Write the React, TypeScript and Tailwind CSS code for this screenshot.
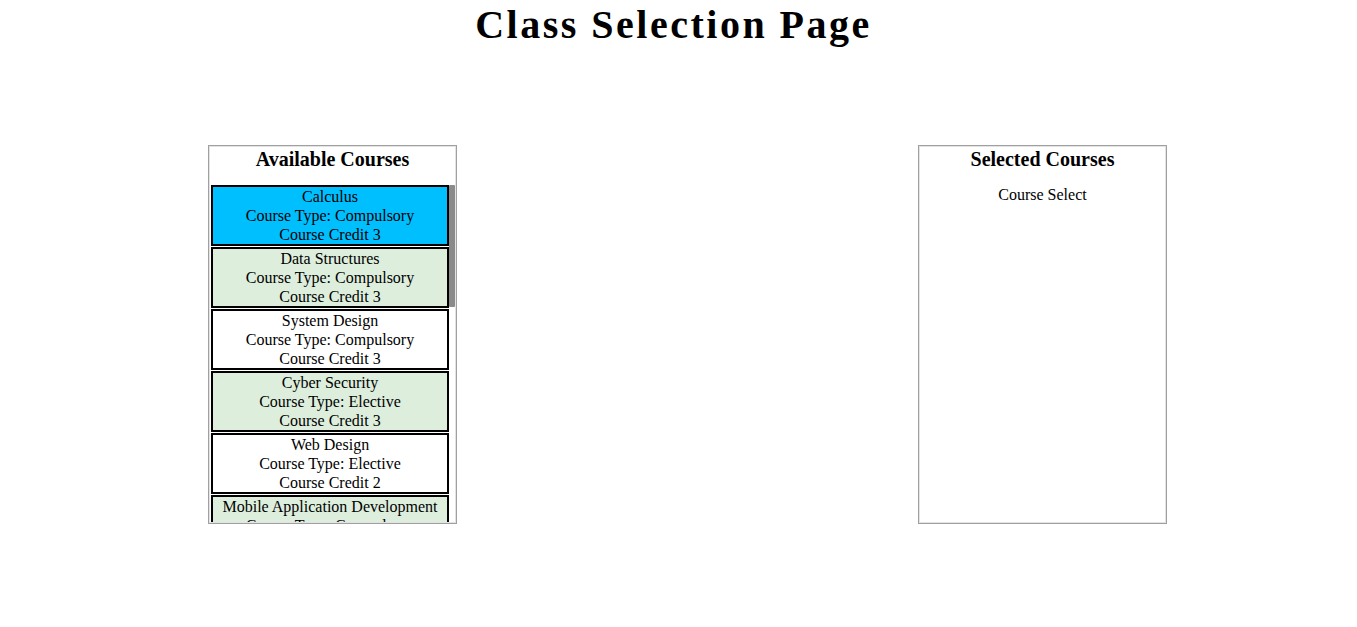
import React, { useState } from "react";

interface Course {
  name: string;
  type: string;
  credit: number;
}

const courses: Course[] = [
  { name: "Calculus", type: "Compulsory", credit: 3 },
  { name: "Data Structures", type: "Compulsory", credit: 3 },
  { name: "System Design", type: "Compulsory", credit: 3 },
  { name: "Cyber Security", type: "Elective", credit: 3 },
  { name: "Web Design", type: "Elective", credit: 2 },
  { name: "Mobile Application Development", type: "Compulsory", credit: 3 },
  { name: "Operating Systems", type: "Compulsory", credit: 3 },
  { name: "Computer Networks", type: "Compulsory", credit: 3 },
  { name: "Machine Learning", type: "Elective", credit: 3 },
  { name: "Database Systems", type: "Compulsory", credit: 3 },
  { name: "Cloud Computing", type: "Elective", credit: 2 },
  { name: "Software Engineering", type: "Compulsory", credit: 3 },
  { name: "Computer Graphics", type: "Elective", credit: 2 },
  { name: "Linear Algebra", type: "Compulsory", credit: 3 },
  { name: "Digital Logic", type: "Elective", credit: 2 },
];

const App = () => {
  const [active, setActive] = useState(0);

  return (
    <div className="min-h-[627px] bg-white text-black font-['Liberation_Serif','Times_New_Roman',serif]">
      <h1 className="pt-[2px] pr-[10px] text-center text-[40px] leading-[46px] font-bold tracking-[2.5px]">
        Class Selection Page
      </h1>

      <div className="mt-[97px] flex pl-[208px] gap-[461px]">
        <div className="w-[249px] h-[379px] border border-[#a0a0a0] p-px shadow-[inset_0_0_0_1px_#e3e3e3] flex flex-col">
          <h2 className="pt-[1px] h-[23px] leading-[23px] mb-[15px] text-center text-[20px] font-bold">
            Available Courses
          </h2>
          <div className="relative flex-1 min-h-0">
            <ul className="h-full overflow-y-scroll pl-px pr-[6px] [scrollbar-width:none] [&::-webkit-scrollbar]:hidden">
              {courses.map((c, idx) => (
                <li
                  key={c.name}
                  onClick={() => setActive(idx)}
                  className={
                    "mb-px border-2 border-black text-center text-[16px] leading-[19px] cursor-pointer " +
                    (idx === active ? "bg-[#00bfff]" : idx % 2 === 1 ? "bg-[#ddeedd]" : "bg-white")
                  }
                >
                  <div>{c.name}</div>
                  <div>Course Type: {c.type}</div>
                  <div>Course Credit {c.credit}</div>
                </li>
              ))}
            </ul>
            <div className="absolute top-0 right-0 w-[6px] h-[122px] bg-[#8a8a8a] rounded-[1px]" />
          </div>
        </div>

        <div className="w-[249px] h-[379px] border border-[#a0a0a0] p-px shadow-[inset_0_0_0_1px_#e3e3e3] flex flex-col">
          <h2 className="pt-[1px] h-[23px] leading-[23px] mb-[14px] text-center text-[20px] font-bold">
            Selected Courses
          </h2>
          <p className="text-center text-[16px] leading-[19px] mt-[1px]">Course Select</p>
        </div>
      </div>
    </div>
  );
};

export default App;
